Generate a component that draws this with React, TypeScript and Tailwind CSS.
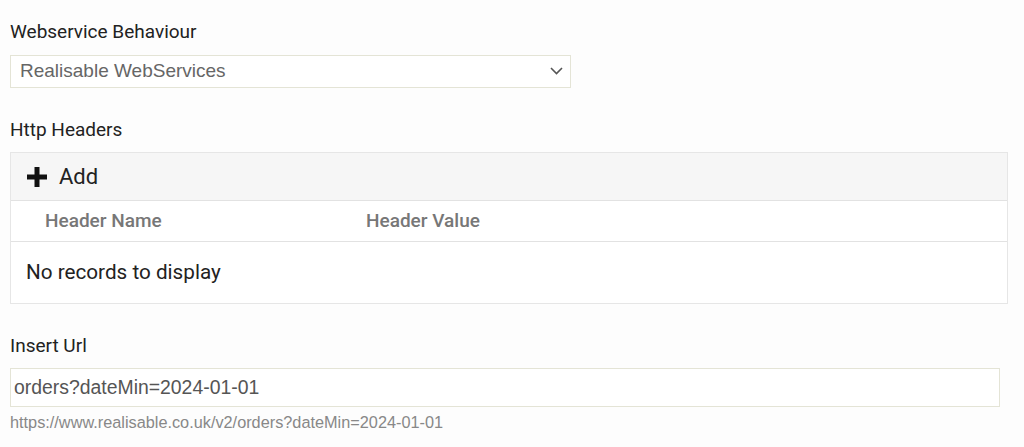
import React, { useState } from 'react';

const App: React.FC = () => {
    const [behaviour, setBehaviour] = useState<string>('Realisable WebServices');
    const [url, setUrl] = useState<string>('orders?dateMin=2024-01-01');

    return (
        <div className="min-h-[447px] w-[1024px] bg-[#fdfdfd] px-[10px] pt-[20px] font-['Roboto',sans-serif]">
            <div className="w-[561px]">
                <label className="block text-[19px] leading-[24px] text-[#222]">Webservice Behaviour</label>
                <div className="relative mt-[11px]">
                    <select
                        value={behaviour}
                        onChange={(e) => setBehaviour(e.target.value)}
                        className="block h-[33px] w-full appearance-none border border-[#e4e4d6] bg-white pl-[9px] font-['Liberation_Sans',Arial,sans-serif] text-[19px] text-[#666] outline-none"
                    >
                        <option>Realisable WebServices</option>
                        <option>Custom</option>
                    </select>
                    <svg
                        className="pointer-events-none absolute right-[8px] top-[12px]"
                        width="13"
                        height="8"
                        viewBox="0 0 13 8"
                        fill="none"
                        stroke="#555"
                        strokeWidth="1.6"
                    >
                        <path d="M1 1l5.5 5.5L12 1" />
                    </svg>
                </div>
            </div>

            <label className="mt-[30px] block text-[19px] leading-[24px] text-[#222]">Http Headers</label>
            <div className="mt-[10px] w-[998px] border border-[#e6e6e6] bg-white">
                <div className="flex h-[48px] items-center gap-[12px] border-b border-[#e2e2e2] bg-[#f6f6f6] pl-[16px]">
                    <svg width="20" height="20" viewBox="0 0 20 20" fill="#111">
                        <path d="M7.5 0h5v7.5H20v5h-7.5V20h-5v-7.5H0v-5h7.5z" />
                    </svg>
                    <span className="text-[22px] text-[#222]">Add</span>
                </div>
                <div className="flex h-[41px] items-center border-b border-[#e2e2e2] text-[19px] font-medium text-[#777]">
                    <span className="w-[355px] pl-[34px]">Header Name</span>
                    <span>Header Value</span>
                </div>
                <div className="flex h-[61px] items-center pl-[15px] text-[20.7px] text-[#222]">No records to display</div>
            </div>

            <label className="mt-[30px] block text-[19px] leading-[24px] text-[#222]">Insert Url</label>
            <input
                value={url}
                onChange={(e) => setUrl(e.target.value)}
                className="mt-[10px] block h-[39px] w-[990px] border border-[#e4e4d6] bg-white pl-[3px] font-['Liberation_Sans',Arial,sans-serif] text-[19.4px] text-[#555] outline-none"
            />
            <p className="mt-[5px] font-['Liberation_Sans',Arial,sans-serif] text-[16.3px] leading-[20px] text-[#888]">
                https://www.realisable.co.uk/v2/{url}
            </p>
        </div>
    );
};

export default App;
